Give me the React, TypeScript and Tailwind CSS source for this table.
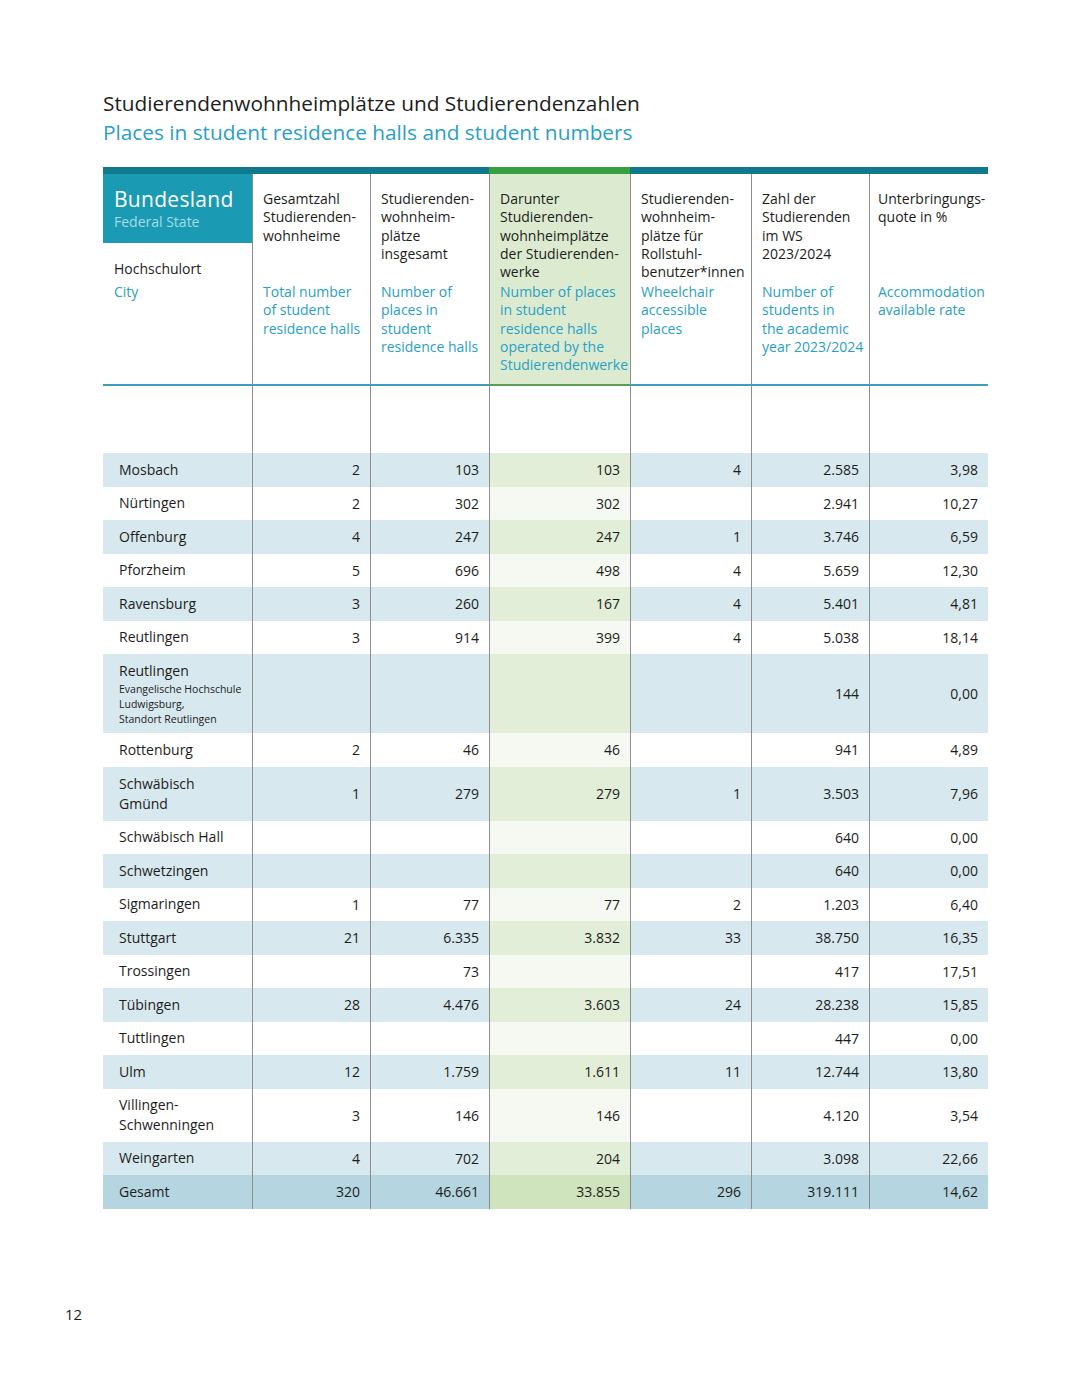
import React from "react";

type Row = {
  name: string;
  sub?: string[];
  v: (string | null)[];
  h: string;
};

const rows: Row[] = [
  { name: "Mosbach", v: ["2", "103", "103", "4", "2.585", "3,98"], h: "h-[33.5px]" },
  { name: "Nürtingen", v: ["2", "302", "302", null, "2.941", "10,27"], h: "h-[33.5px]" },
  { name: "Offenburg", v: ["4", "247", "247", "1", "3.746", "6,59"], h: "h-[33.5px]" },
  { name: "Pforzheim", v: ["5", "696", "498", "4", "5.659", "12,30"], h: "h-[33.5px]" },
  { name: "Ravensburg", v: ["3", "260", "167", "4", "5.401", "4,81"], h: "h-[33.5px]" },
  { name: "Reutlingen", v: ["3", "914", "399", "4", "5.038", "18,14"], h: "h-[33.5px]" },
  {
    name: "Reutlingen",
    sub: ["Evangelische Hochschule", "Ludwigsburg,", "Standort Reutlingen"],
    v: [null, null, null, null, "144", "0,00"],
    h: "h-[79px]",
  },
  { name: "Rottenburg", v: ["2", "46", "46", null, "941", "4,89"], h: "h-[33.5px]" },
  { name: "Schwäbisch\nGmünd", v: ["1", "279", "279", "1", "3.503", "7,96"], h: "h-[54px]" },
  { name: "Schwäbisch Hall", v: [null, null, null, null, "640", "0,00"], h: "h-[33.5px]" },
  { name: "Schwetzingen", v: [null, null, null, null, "640", "0,00"], h: "h-[33.5px]" },
  { name: "Sigmaringen", v: ["1", "77", "77", "2", "1.203", "6,40"], h: "h-[33.5px]" },
  { name: "Stuttgart", v: ["21", "6.335", "3.832", "33", "38.750", "16,35"], h: "h-[33.5px]" },
  { name: "Trossingen", v: [null, "73", null, null, "417", "17,51"], h: "h-[33.5px]" },
  { name: "Tübingen", v: ["28", "4.476", "3.603", "24", "28.238", "15,85"], h: "h-[33.5px]" },
  { name: "Tuttlingen", v: [null, null, null, null, "447", "0,00"], h: "h-[33.5px]" },
  { name: "Ulm", v: ["12", "1.759", "1.611", "11", "12.744", "13,80"], h: "h-[33.5px]" },
  { name: "Villingen-\nSchwenningen", v: ["3", "146", "146", null, "4.120", "3,54"], h: "h-[53px]" },
  { name: "Weingarten", v: ["4", "702", "204", null, "3.098", "22,66"], h: "h-[33.5px]" },
];

const widths = ["w-[118px]", "w-[119px]", "w-[141px]", "w-[121px]", "w-[118px]", "w-[119px]"];
const padL = ["pl-[10px]", "pl-[10px]", "pl-[10px]", "pl-[10px]", "pl-[10px]", "pl-[8px]"];

const headers: { de: string[]; en: string[] }[] = [
  { de: ["Gesamtzahl", "Studierenden-", "wohnheime"], en: ["Total number", "of student", "residence halls"] },
  { de: ["Studierenden-", "wohnheim-", "plätze", "insgesamt"], en: ["Number of", "places in", "student", "residence halls"] },
  {
    de: ["Darunter", "Studierenden-", "wohnheimplätze", "der Studierenden-", "werke"],
    en: ["Number of places", "in student", "residence halls", "operated by the", "Studierendenwerke"],
  },
  { de: ["Studierenden-", "wohnheim-", "plätze für", "Rollstuhl-", "benutzer*innen"], en: ["Wheelchair", "accessible", "places"] },
  { de: ["Zahl der", "Studierenden", "im WS", "2023/2024"], en: ["Number of", "students in", "the academic", "year 2023/2024"] },
  { de: ["Unterbringungs-", "quote in %"], en: ["Accommodation", "available rate"] },
];

function cellBg(ci: number, shaded: boolean, total: boolean) {
  if (total) return ci === 2 ? "bg-[#cfe3bd]" : "bg-[#b5d5e0]";
  if (ci === 2) return shaded ? "bg-[#e2eed8]" : "bg-[#f5f9f1]";
  return shaded ? "bg-[#d7e8ee]" : "bg-white";
}

export default function App() {
  return (
    <div
      className="w-[1080px] h-[1388px] bg-white text-[#1d1d1b] relative"
      style={{ fontFamily: '"Open Sans", "Noto Sans", Arial, sans-serif' }}
    >
      <div className="pt-[89px] pl-[103px]">
        <div className="text-[20.8px] leading-[29px]">Studierendenwohnheimplätze und Studierendenzahlen</div>
        <div className="text-[20.8px] leading-[29px] text-[#2aa0c6]">
          Places in student residence halls and student numbers
        </div>

        <div className="mt-[20px] w-[885px]">
          {/* top bar */}
          <div className="flex h-[7px]">
            <div className="w-[386px] bg-[#11798c]" />
            <div className="w-[141px] bg-[#37a13d]" />
            <div className="flex-1 bg-[#11798c]" />
          </div>

          {/* header */}
          <div className="flex h-[212px] text-[14px] leading-[18.3px]">
            <div className="w-[149px] border-b-2 border-[#3d9dbe] flex flex-col">
              <div className="h-[69px] bg-[#1b9ab4] pl-[11px] pt-[12px]">
                <div className="text-white text-[21px] leading-[26px] tracking-[0.3px]">Bundesland</div>
                <div className="text-[#a6dbe8] text-[14px] leading-[20px]">Federal State</div>
              </div>
              <div className="pl-[11px] pt-[16px]">
                <div className="leading-[20px]">Hochschulort</div>
                <div className="text-[#2aa0c6] leading-[26px]">City</div>
              </div>
            </div>
            {headers.map((h, i) => (
              <div
                key={i}
                className={`${widths[i]} ${padL[i]} border-l border-[#8e8e8e] border-b-2 pr-[2px] pt-[16px] ${
                  i === 2 ? "bg-[#dcebd0] border-b-[#5d9e58]" : "border-b-[#3d9dbe]"
                }`}
              >
                <div className="h-[93px] whitespace-nowrap">
                  {h.de.map((l, k) => (
                    <div key={k}>{l}</div>
                  ))}
                </div>
                <div className="text-[#2aa0c6] whitespace-nowrap">
                  {h.en.map((l, k) => (
                    <div key={k}>{l}</div>
                  ))}
                </div>
              </div>
            ))}
          </div>

          {/* spacer */}
          <div className="flex h-[67px]">
            <div className="w-[149px]" />
            {widths.map((w, i) => (
              <div key={i} className={`${w} border-l border-[#8e8e8e]`} />
            ))}
          </div>

          {/* rows */}
          {rows.map((r, ri) => {
            const shaded = ri % 2 === 0;
            return (
              <div key={ri} className={`flex ${r.h} text-[14px]`}>
                <div
                  className={`w-[149px] pl-[16px] flex flex-col justify-center ${
                    shaded ? "bg-[#d7e8ee]" : "bg-white"
                  }`}
                >
                  <div className="whitespace-pre-line leading-[20px]">{r.name}</div>
                  {r.sub && (
                    <div className="text-[10.5px] leading-[15px] mt-[1px]">
                      {r.sub.map((s, k) => (
                        <div key={k}>{s}</div>
                      ))}
                    </div>
                  )}
                </div>
                {r.v.map((v, ci) => (
                  <div
                    key={ci}
                    className={`${widths[ci]} border-l border-[#8e8e8e] flex items-center justify-end pr-[10px] ${cellBg(
                      ci,
                      shaded,
                      false
                    )}`}
                  >
                    {v}
                  </div>
                ))}
              </div>
            );
          })}
          <div className="flex h-[33.5px] text-[14px]">
            <div className="w-[149px] pl-[16px] flex items-center bg-[#b5d5e0]">Gesamt</div>
            {["320", "46.661", "33.855", "296", "319.111", "14,62"].map((v, ci) => (
              <div
                key={ci}
                className={`${widths[ci]} border-l border-[#8e8e8e] flex items-center justify-end pr-[10px] ${cellBg(
                  ci,
                  false,
                  true
                )}`}
              >
                {v}
              </div>
            ))}
          </div>
        </div>
      </div>

      <div className="absolute left-[65px] top-[1304px] text-[15px] leading-[20px]">12</div>
    </div>
  );
}
